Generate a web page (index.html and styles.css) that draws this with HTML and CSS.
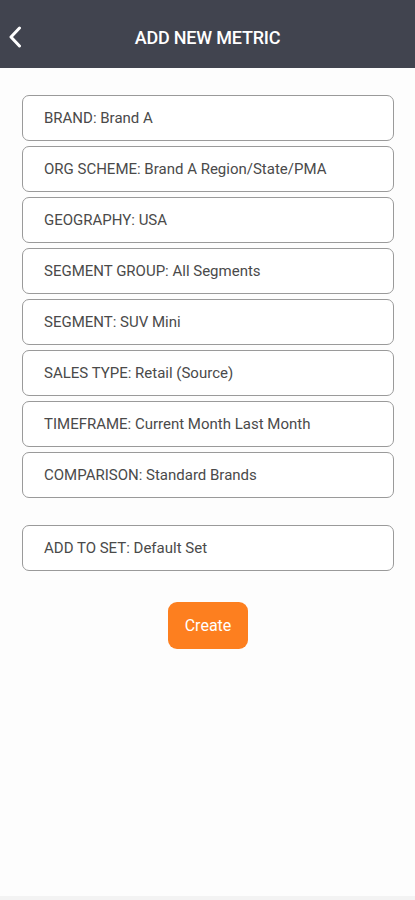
FILE: index.html
```html
<!DOCTYPE html>
<html>
<head>
<meta charset="utf-8">
<link rel="stylesheet" href="styles.css">
</head>
<body>
<div class="app">
  <header class="topbar">
    <button class="back" aria-label="Back">
      <svg width="16" height="22" viewBox="0 0 16 22"><path d="M12.5 2 L4 11 L12.5 20" fill="none" stroke="#fff" stroke-width="3" stroke-linecap="round" stroke-linejoin="round"/></svg>
    </button>
    <h1 class="title">ADD NEW METRIC</h1>
  </header>
  <main class="content">
    <div class="fields">
      <div class="field">BRAND: Brand A</div>
      <div class="field">ORG SCHEME: Brand A Region/State/PMA</div>
      <div class="field">GEOGRAPHY: USA</div>
      <div class="field">SEGMENT GROUP: All Segments</div>
      <div class="field">SEGMENT: SUV Mini</div>
      <div class="field">SALES TYPE: Retail (Source)</div>
      <div class="field">TIMEFRAME: Current Month Last Month</div>
      <div class="field">COMPARISON: Standard Brands</div>
    </div>
    <div class="fields set">
      <div class="field">ADD TO SET: Default Set</div>
    </div>
    <div class="actions">
      <button class="create">Create</button>
    </div>
  </main>
  <div class="bottom"></div>
</div>
</body>
</html>
```
FILE: styles.css
```css
* { box-sizing: border-box; }
html, body { margin: 0; padding: 0; }
body {
  font-family: Roboto, "Noto Sans", sans-serif;
  background: #fdfdfd;
  width: 415px;
  height: 900px;
  overflow: hidden;
}
.app {
  display: flex;
  flex-direction: column;
  height: 900px;
}
.topbar {
  height: 68px;
  background: #41444f;
  display: flex;
  align-items: center;
  justify-content: center;
  position: relative;
  flex: none;
}
.back {
  position: absolute;
  left: 7px;
  top: 26px;
  background: none;
  border: 0;
  padding: 0;
  width: 16px;
  height: 22px;
  display: flex;
  align-items: center;
}
.title {
  margin: 0;
  color: #fff;
  font-size: 18px;
  font-weight: 500;
  letter-spacing: -0.2px;
  padding-top: 6px;
}
.content {
  flex: 1;
  padding: 27px 21px 0 22px;
}
.fields {
  display: flex;
  flex-direction: column;
  gap: 5px;
}
.set { margin-top: 27px; }
.field {
  height: 46px;
  border: 1px solid #9a9a9a;
  border-radius: 7px;
  background: #fff;
  display: flex;
  align-items: center;
  padding-left: 21px;
  font-size: 15px;
  color: #4a4a4a;
}
.actions {
  display: flex;
  justify-content: center;
  margin-top: 31px;
}
.create {
  width: 80px;
  height: 47px;
  border: 0;
  border-radius: 9px;
  background: #fd7f1f;
  color: #fff;
  font-family: Roboto, sans-serif;
  font-size: 16px;
}
.bottom {
  height: 4px;
  background: #f3f3f3;
  flex: none;
}
```
